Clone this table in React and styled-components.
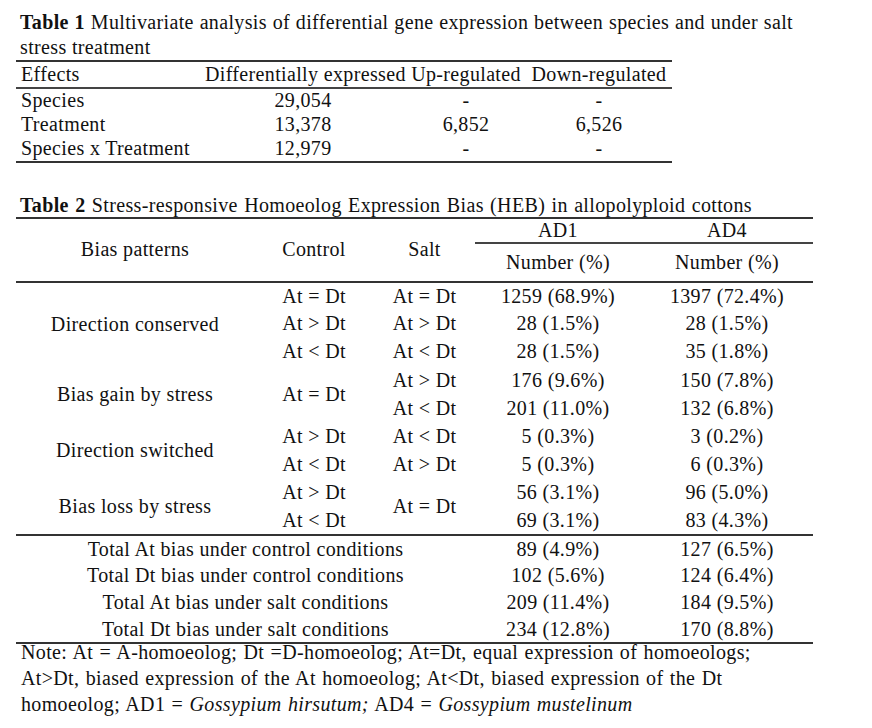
import React from 'react'
import styled, { createGlobalStyle } from 'styled-components'

const GlobalStyle = createGlobalStyle`
  html, body {
    margin: 0;
    padding: 0;
    background: #fff;
  }
  body {
    font-family: "Liberation Serif", "Times New Roman", serif;
    color: #111;
  }
`

const Page = styled.div`
  width: 872px;
  height: 728px;
  padding: 10px 0 0 16px;
  box-sizing: border-box;
  font-size: 20px;
  letter-spacing: 0.35px;
  overflow: hidden;
`

const Caption = styled.div`
  width: ${p => p.$width}px;
  padding-left: 4px;
  box-sizing: border-box;
  line-height: ${p => p.$lh || 25}px;
  text-align: ${p => (p.$justify ? 'justify' : 'left')};
  word-spacing: ${p => p.$ws || 0}px;
  margin-top: ${p => p.$mt || 0}px;
`

const Bold = styled.b`
  font-weight: 700;
`

const Table = styled.table`
  width: ${p => p.$width}px;
  border-collapse: collapse;
  table-layout: fixed;
  border-top: 2px solid #333;
  border-bottom: 2px solid #333;
`

const Row = styled.tr`
  height: ${p => p.$h}px;
  border-top: ${p => (p.$rule ? '2px solid #333' : 'none')};
`

const Cell = styled.td`
  padding: 0 5px;
  text-align: ${p => p.$align || 'center'};
  vertical-align: middle;
  line-height: 21px;
  white-space: nowrap;
  font-weight: 400;
  border-bottom: ${p => (p.$rule ? '2px solid #444' : 'none')};
`

const Note = styled.div`
  width: 820px;
  padding-left: 5px;
  box-sizing: border-box;
  line-height: 26px;
  margin-top: -5px;
  word-spacing: 1px;
`

const Species = styled.i`
  font-style: italic;
`

const table1 = [
  ['Species', '29,054', '-', '-'],
  ['Treatment', '13,378', '6,852', '6,526'],
  ['Species x Treatment', '12,979', '-', '-'],
]

const totals = [
  ['Total At bias under control conditions', '89 (4.9%)', '127 (6.5%)'],
  ['Total Dt bias under control conditions', '102 (5.6%)', '124 (6.4%)'],
  ['Total At bias under salt conditions', '209 (11.4%)', '184 (9.5%)'],
  ['Total Dt bias under salt conditions', '234 (12.8%)', '170 (8.8%)'],
]

const RH = 28.2

export default function App() {
  return (
    <Page>
      <GlobalStyle />
      <Caption $width={777} $justify>
        <Bold>Table 1</Bold> Multivariate analysis of differential gene expression between species and under salt stress treatment
      </Caption>
      <Table $width={656}>
        <colgroup>
          <col style={{ width: 184 }} />
          <col style={{ width: 206 }} />
          <col style={{ width: 120 }} />
          <col style={{ width: 146 }} />
        </colgroup>
        <thead>
          <Row $h={27}>
            <Cell as="th" $align="left" $rule>Effects</Cell>
            <Cell as="th" $rule>Differentially expressed</Cell>
            <Cell as="th" $rule>Up-regulated</Cell>
            <Cell as="th" $rule>Down-regulated</Cell>
          </Row>
        </thead>
        <tbody>
          {table1.map(r => (
            <Row $h={24.5} key={r[0]}>
              <Cell $align="left">{r[0]}</Cell>
              <Cell>{r[1]}</Cell>
              <Cell>{r[2]}</Cell>
              <Cell>{r[3]}</Cell>
            </Row>
          ))}
        </tbody>
      </Table>

      <Caption $width={797} $lh={24} $mt={30} $ws={1}>
        <Bold>Table 2</Bold> Stress-responsive Homoeolog Expression Bias (HEB) in allopolyploid cottons
      </Caption>
      <Table $width={797}>
        <colgroup>
          <col style={{ width: 238 }} />
          <col style={{ width: 120 }} />
          <col style={{ width: 101 }} />
          <col style={{ width: 166 }} />
          <col style={{ width: 172 }} />
        </colgroup>
        <thead>
          <Row $h={25}>
            <Cell as="th" rowSpan={2}>Bias patterns</Cell>
            <Cell as="th" rowSpan={2}>Control</Cell>
            <Cell as="th" rowSpan={2}>Salt</Cell>
            <Cell as="th" $rule>AD1</Cell>
            <Cell as="th" $rule>AD4</Cell>
          </Row>
          <Row $h={39}>
            <Cell as="th">Number (%)</Cell>
            <Cell as="th">Number (%)</Cell>
          </Row>
        </thead>
        <tbody>
          <Row $h={RH} $rule>
            <Cell rowSpan={3}>Direction conserved</Cell>
            <Cell>At = Dt</Cell>
            <Cell>At = Dt</Cell>
            <Cell>1259 (68.9%)</Cell>
            <Cell>1397 (72.4%)</Cell>
          </Row>
          <Row $h={RH}>
            <Cell>At &gt; Dt</Cell>
            <Cell>At &gt; Dt</Cell>
            <Cell>28 (1.5%)</Cell>
            <Cell>28 (1.5%)</Cell>
          </Row>
          <Row $h={RH}>
            <Cell>At &lt; Dt</Cell>
            <Cell>At &lt; Dt</Cell>
            <Cell>28 (1.5%)</Cell>
            <Cell>35 (1.8%)</Cell>
          </Row>
          <Row $h={RH}>
            <Cell rowSpan={2}>Bias gain by stress</Cell>
            <Cell rowSpan={2}>At = Dt</Cell>
            <Cell>At &gt; Dt</Cell>
            <Cell>176 (9.6%)</Cell>
            <Cell>150 (7.8%)</Cell>
          </Row>
          <Row $h={RH}>
            <Cell>At &lt; Dt</Cell>
            <Cell>201 (11.0%)</Cell>
            <Cell>132 (6.8%)</Cell>
          </Row>
          <Row $h={RH}>
            <Cell rowSpan={2}>Direction switched</Cell>
            <Cell>At &gt; Dt</Cell>
            <Cell>At &lt; Dt</Cell>
            <Cell>5 (0.3%)</Cell>
            <Cell>3 (0.2%)</Cell>
          </Row>
          <Row $h={RH}>
            <Cell>At &lt; Dt</Cell>
            <Cell>At &gt; Dt</Cell>
            <Cell>5 (0.3%)</Cell>
            <Cell>6 (0.3%)</Cell>
          </Row>
          <Row $h={RH}>
            <Cell rowSpan={2}>Bias loss by stress</Cell>
            <Cell>At &gt; Dt</Cell>
            <Cell rowSpan={2}>At = Dt</Cell>
            <Cell>56 (3.1%)</Cell>
            <Cell>96 (5.0%)</Cell>
          </Row>
          <Row $h={RH}>
            <Cell>At &lt; Dt</Cell>
            <Cell>69 (3.1%)</Cell>
            <Cell>83 (4.3%)</Cell>
          </Row>
          {totals.map((t, i) => (
            <Row $h={27} $rule={i === 0} key={t[0]}>
              <Cell colSpan={3}>{t[0]}</Cell>
              <Cell>{t[1]}</Cell>
              <Cell>{t[2]}</Cell>
            </Row>
          ))}
        </tbody>
      </Table>
      <Note>
        Note: At = A-homoeolog; Dt =D-homoeolog; At=Dt, equal expression of homoeologs;
        <br />
        At&gt;Dt, biased expression of the At homoeolog; At&lt;Dt, biased expression of the Dt
        <br />
        homoeolog; AD1 = <Species>Gossypium hirsutum;</Species> AD4 = <Species>Gossypium mustelinum</Species>
      </Note>
    </Page>
  )
}
